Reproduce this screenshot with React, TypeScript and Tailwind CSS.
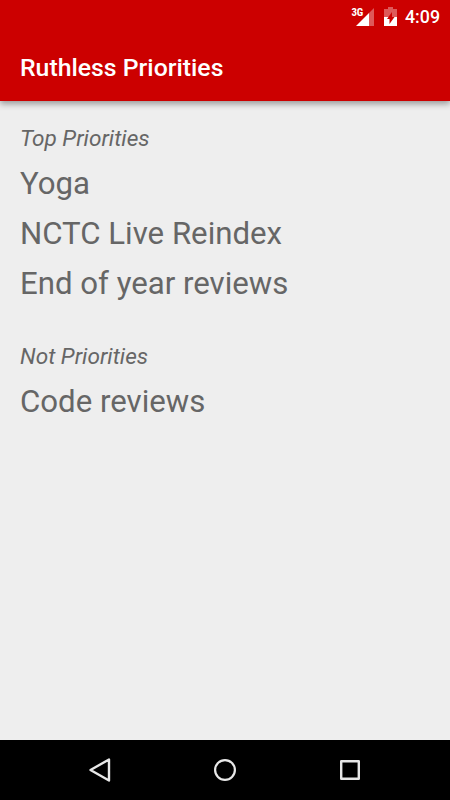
const topPriorities = ["Yoga", "NCTC Live Reindex", "End of year reviews"];
const notPriorities = ["Code reviews"];

function StatusBar() {
  return (
    <div className="flex h-[33px] items-center justify-end pr-[10px]">
      <span className="-mr-[7px] mb-[9px] font-['Roboto_Condensed','Roboto',sans-serif] text-[11px] font-bold leading-none tracking-[-0.2px]">3G</span>
      <svg width="18" height="18" viewBox="0 0 18 18" className="mr-[10px]">
        <path d="M18 0v18h-5V5z" fill="#fff" fillOpacity="0.35" />
        <path d="M13 5v13H0z" fill="#fff" />
      </svg>
      <svg width="13" height="19" viewBox="0 0 13 19" className="mr-[8px]">
        <path d="M4 0h5v2h4v8H0V2h4z" fill="#fff" fillOpacity="0.35" />
        <path d="M0 10h13v9H0z" fill="#fff" />
        <path d="M8 5v5h2.500L5.500 17v-5H3z" fill="#c00" />
      </svg>
      <span className="text-[17.8px] font-medium leading-none">4:09</span>
    </div>
  );
}

function PrioritySection({ title, items }: { title: string; items: string[] }) {
  return (
    <section>
      <h2 className="text-[22.6px] italic leading-[26px]">{title}</h2>
      <ul className="pt-[7px]">
        {items.map((item) => (
          <li key={item} className="h-[50.4px] text-[31.2px] leading-[50px]">{item}</li>
        ))}
      </ul>
    </section>
  );
}

function NavigationBar() {
  return (
    <nav className="flex h-[60px] items-center justify-center gap-[101px] bg-black">
      <svg width="24" height="26" viewBox="0 0 24 26" fill="none" stroke="#e8e8e8" strokeWidth="2.4" strokeLinejoin="round">
        <path d="M21 2.5v21L2.5 13z" />
      </svg>
      <svg width="24" height="24" viewBox="0 0 24 24" fill="none" stroke="#e8e8e8" strokeWidth="2.2">
        <circle cx="12" cy="12" r="9.9" />
      </svg>
      <svg width="24" height="24" viewBox="0 0 24 24" fill="none" stroke="#e8e8e8" strokeWidth="2.4" strokeLinejoin="round">
        <path d="M3.2 3.2h17.6v17.6H3.2z" />
      </svg>
    </nav>
  );
}

export default function App() {
  return (
    <div className="flex h-[800px] w-[450px] flex-col bg-[#eee] font-['Roboto',sans-serif] text-[#666]">
      <header className="h-[101px] bg-[#c00] text-white shadow-[0_3px_6px_rgba(0,0,0,0.35)]">
        <StatusBar />
        <h1 className="pl-5 text-[24.8px] font-medium leading-[69px]">Ruthless Priorities</h1>
      </header>
      <main className="flex flex-1 flex-col gap-[34.4px] px-5 pt-[24.5px]">
        <PrioritySection title="Top Priorities" items={topPriorities} />
        <PrioritySection title="Not Priorities" items={notPriorities} />
      </main>
      <NavigationBar />
    </div>
  );
}
